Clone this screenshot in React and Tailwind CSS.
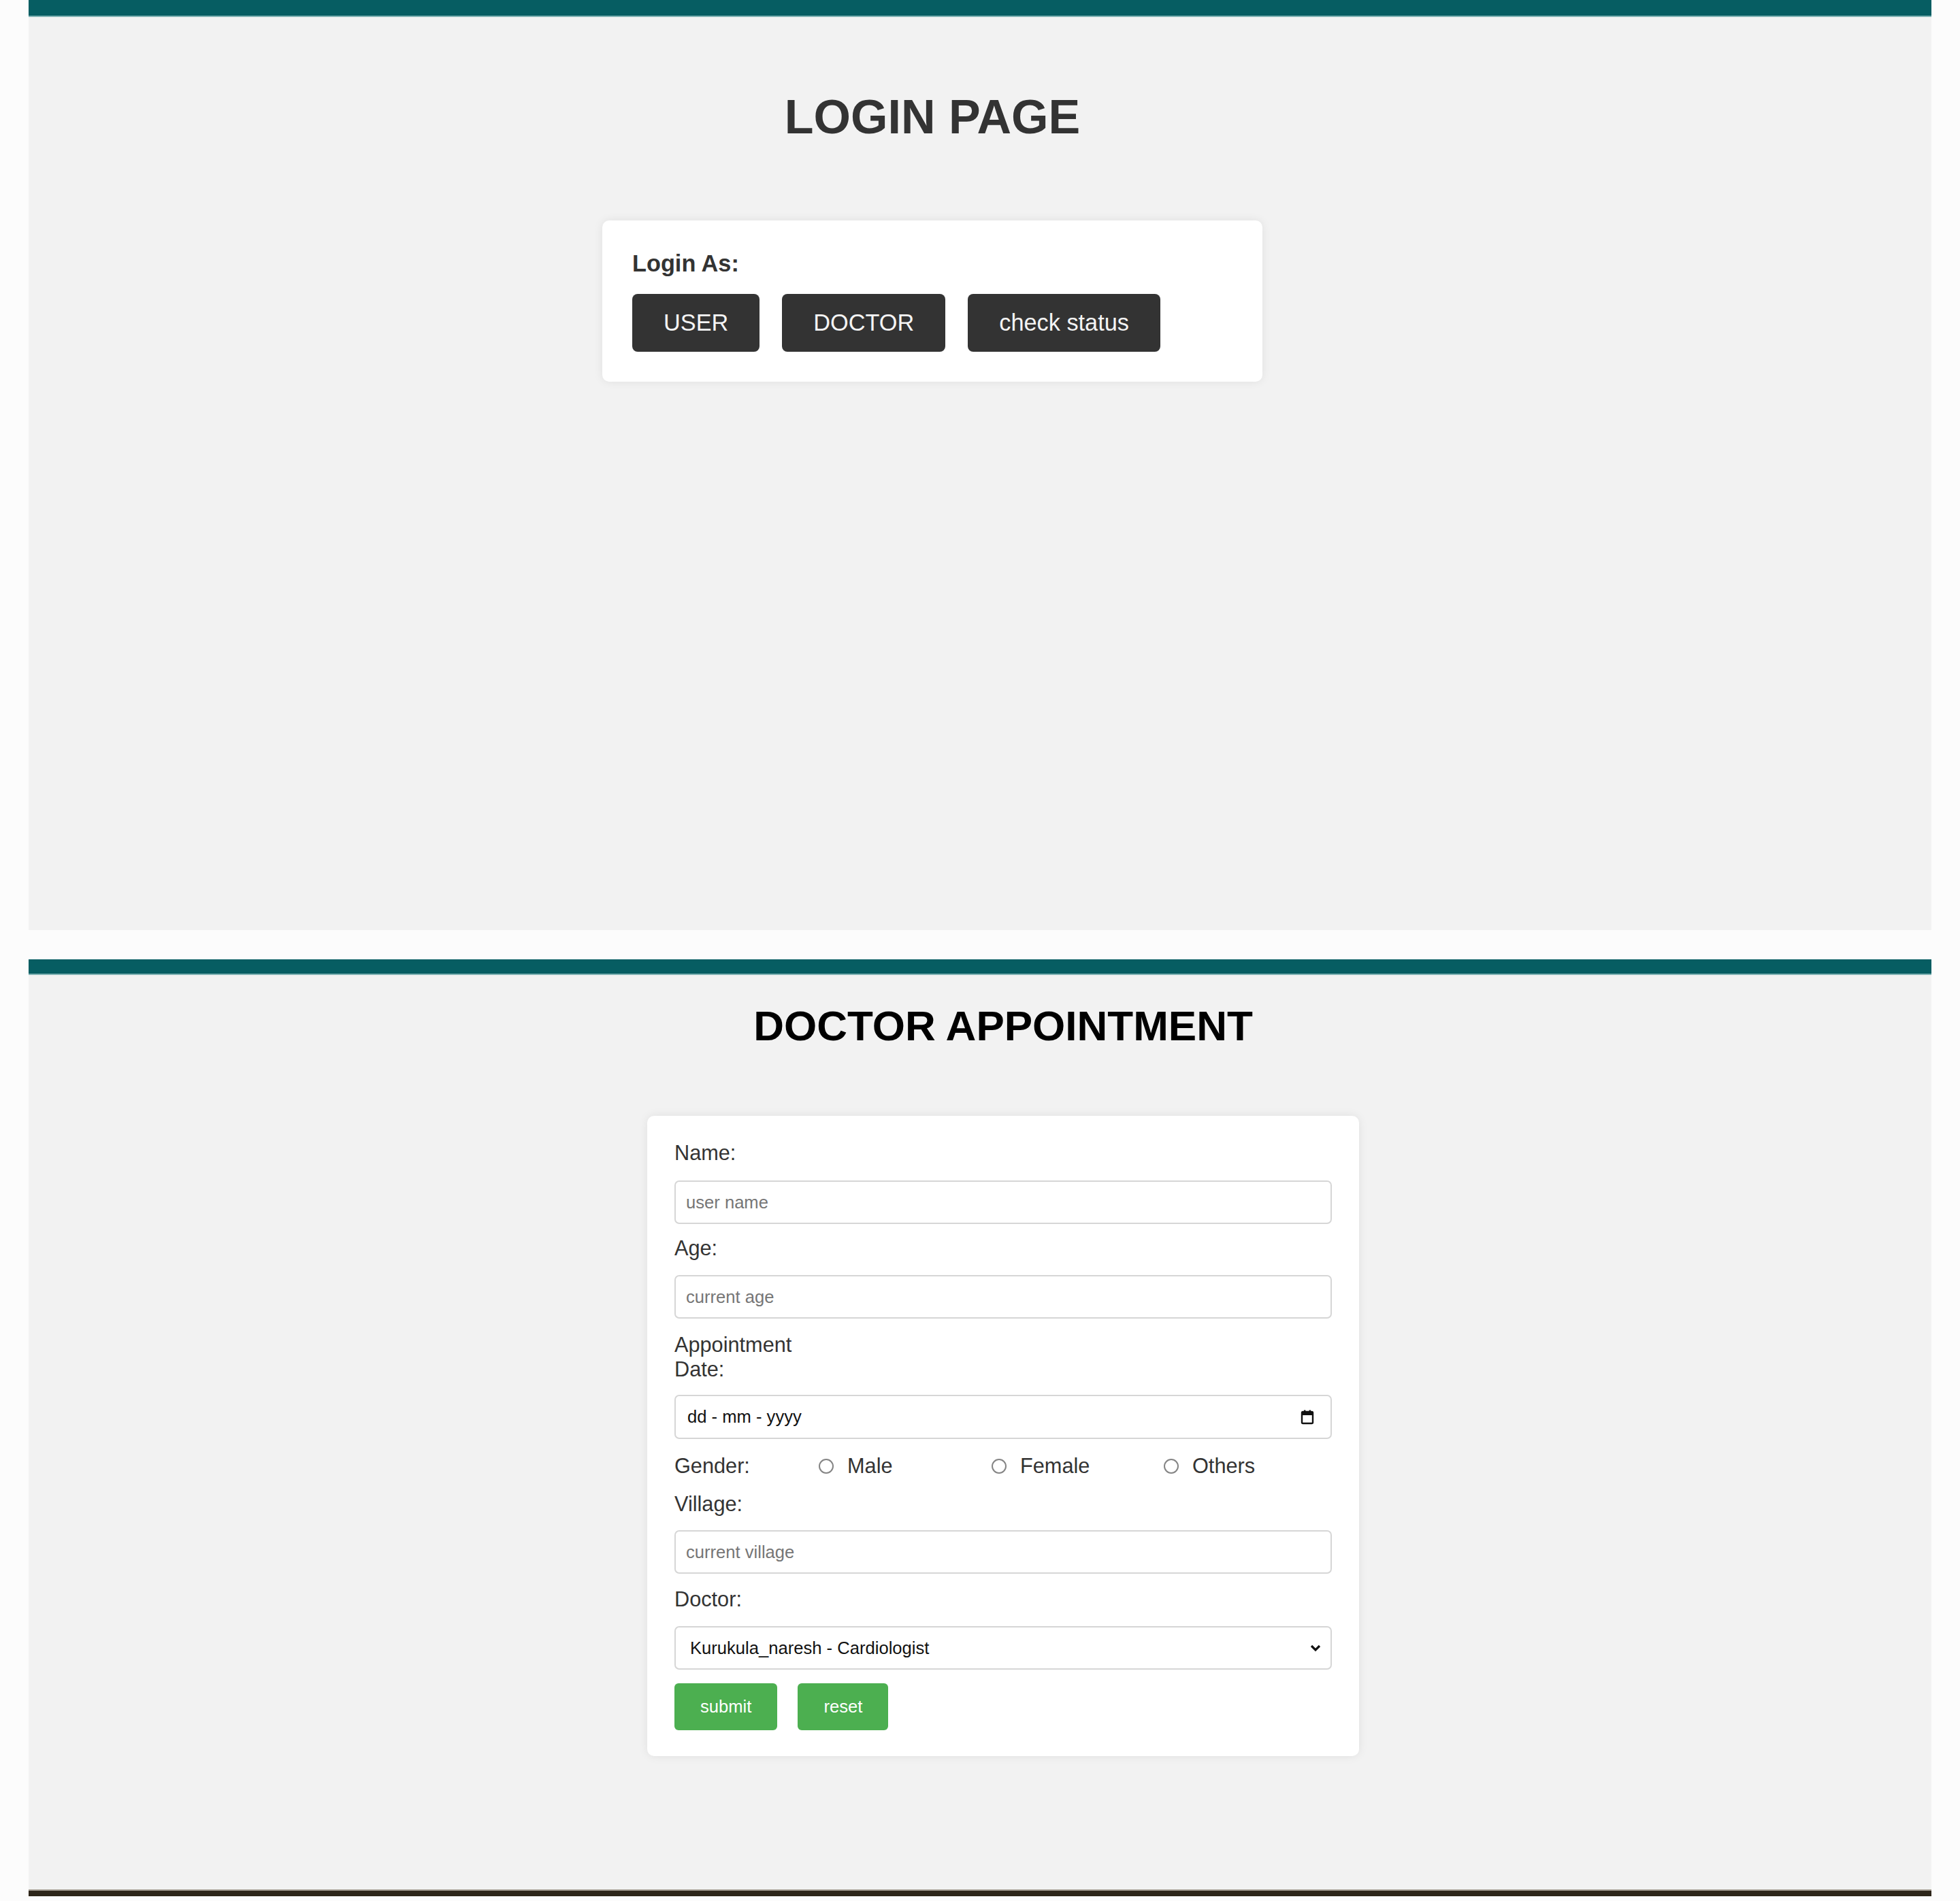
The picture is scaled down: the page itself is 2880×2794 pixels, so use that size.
function TealBar() {
  return <div className="h-[23px] bg-[#065d62] border-b-[2px] border-[#7fb2b3]" />;
}

function Label({ children, className = "" }) {
  return (
    <label className={`block w-[212px] text-[30.7px] leading-[36px] text-[#333] ${className}`}>
      {children}
    </label>
  );
}

function TextInput({ placeholder, className = "" }) {
  return (
    <input
      placeholder={placeholder}
      className={`block w-full h-[64px] px-[15px] bg-white border-[2px] border-[#d6d6d6] rounded-[7px] text-[25.6px] text-[#111] placeholder:text-[#767676] outline-none ${className}`}
    />
  );
}

function Radio({ label, width }) {
  return (
    <div className="flex items-center">
      <span className="w-[22px] h-[22px] rounded-full border-[2px] border-[#858585] bg-white mr-[20px]" />
      <span className={`${width} text-[30.7px] leading-[36px] text-[#333]`}>{label}</span>
    </div>
  );
}

function LoginSection() {
  return (
    <section className="h-[1367px] bg-[#f2f2f2]">
      <div className="h-[25px] bg-[#065d62] border-b-[2px] border-[#7fb2b3]" />
      <div className="flex flex-col items-center pr-[140px]">
        <h1 className="mt-[107px] text-[70px] leading-[80px] font-bold text-[#333]">LOGIN PAGE</h1>
        <div className="mt-[112px] w-[970px] bg-white rounded-[10px] shadow-[0_0_14px_rgba(0,0,0,0.08)] px-[44px] pt-[44px] pb-[44px]">
          <p className="text-[34.3px] leading-[39px] font-bold text-[#333]">Login As:</p>
          <div className="mt-[25px] flex gap-[33px]">
            {["USER", "DOCTOR", "check status"].map((t) => (
              <button
                key={t}
                className="h-[85px] px-[46px] bg-[#333] text-[#f4f4f4] text-[34.3px] rounded-[8px]"
              >
                {t}
              </button>
            ))}
          </div>
        </div>
      </div>
    </section>
  );
}

function AppointmentSection() {
  return (
    <section className="mt-[43px] h-[1377px] bg-[#f2f2f2] flex flex-col">
      <TealBar />
      <div className="flex flex-col items-center pl-[68px]">
        <h1 className="mt-[39px] text-[62px] leading-[71px] font-bold text-black">DOCTOR APPOINTMENT</h1>
        <form className="mt-[97px] w-[1046px] bg-white rounded-[10px] shadow-[0_0_14px_rgba(0,0,0,0.08)] px-[40px] pt-[37px] pb-[38px]">
          <Label>Name:</Label>
          <TextInput placeholder="user name" className="mt-[22px]" />
          <Label className="mt-[18px]">Age:</Label>
          <TextInput placeholder="current age" className="mt-[21px]" />
          <Label className="mt-[21px]">Appointment Date:</Label>
          <div className="mt-[19px] h-[65px] flex items-center justify-between pl-[17px] pr-[22px] bg-white border-[2px] border-[#d6d6d6] rounded-[7px]">
            <span className="text-[25.6px] text-[#111]">dd - mm - yyyy</span>
            <svg width="24" height="24" viewBox="0 0 24 24">
              <rect x="4" y="4" width="16" height="17" rx="1.5" fill="none" stroke="#111" strokeWidth="2.4" />
              <rect x="4" y="4" width="16" height="5" fill="#111" />
              <rect x="7" y="1.5" width="2.4" height="3" fill="#111" />
              <rect x="14.6" y="1.5" width="2.4" height="3" fill="#111" />
            </svg>
          </div>
          <div className="mt-[22px] flex items-center">
            <Label>Gender:</Label>
            <Radio label="Male" width="w-[212px]" />
            <Radio label="Female" width="w-[211px]" />
            <Radio label="Others" width="w-[120px]" />
          </div>
          <Label className="mt-[20px]">Village:</Label>
          <TextInput placeholder="current village" className="mt-[20px] h-[63px]" />
          <Label className="mt-[20px]">Doctor:</Label>
          <div className="mt-[21px] h-[64px] flex items-center justify-between pl-[21px] pr-[12px] bg-white border-[2px] border-[#d6d6d6] rounded-[7px]">
            <span className="text-[25.6px] text-[#111]">Kurukula_naresh - Cardiologist</span>
            <svg width="20" height="20" viewBox="0 0 20 20">
              <polyline points="4,7 10,13 16,7" fill="none" stroke="#111" strokeWidth="3.2" />
            </svg>
          </div>
          <div className="mt-[20px] flex gap-[30px]">
            <button type="button" className="h-[69px] px-[38px] bg-[#4caf50] text-white text-[25.6px] rounded-[6px]">
              submit
            </button>
            <button type="button" className="h-[69px] px-[38px] bg-[#4caf50] text-white text-[25.6px] rounded-[6px]">
              reset
            </button>
          </div>
        </form>
      </div>
      <div className="flex-1" />
      <div className="h-[10px] bg-[#2d2519] border-t-[2px] border-[#9e978c]" />
    </section>
  );
}

export default function App() {
  return (
    <div className="min-h-[2794px] bg-[#fcfcfc] px-[42px] font-['Liberation_Sans',Arial,sans-serif]">
      <LoginSection />
      <AppointmentSection />
    </div>
  );
}
